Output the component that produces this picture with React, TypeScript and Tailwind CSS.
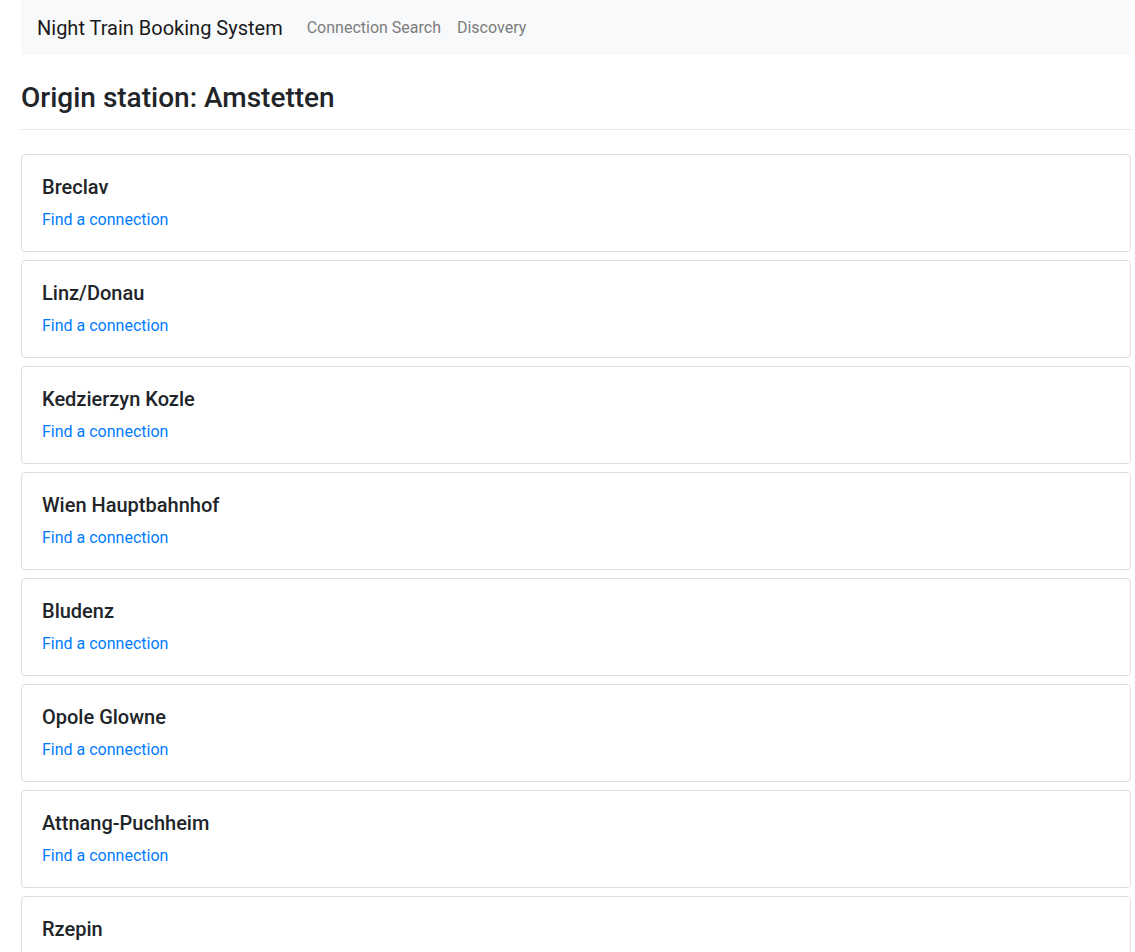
import React from "react";

const stations = [
  "Breclav",
  "Linz/Donau",
  "Kedzierzyn Kozle",
  "Wien Hauptbahnhof",
  "Bludenz",
  "Opole Glowne",
  "Attnang-Puchheim",
  "Rzepin",
];

export default function App() {
  return (
    <div
      className="h-[952px] overflow-hidden bg-white text-[#212529]"
      style={{ fontFamily: "Roboto, 'Liberation Sans', sans-serif" }}
    >
      <div className="ml-[21px] w-[1110px]">
        <nav className="flex h-[55px] items-center bg-[#f8f9fa] px-4">
          <span className="mr-4 text-[20px] leading-[30px] text-[#1a1a1a]">
            Night Train Booking System
          </span>
          <a className="px-2 text-[16px] leading-6 text-[#7c7d7d]">Connection Search</a>
          <a className="px-2 text-[16px] leading-6 text-[#7c7d7d]">Discovery</a>
        </nav>
        <h3 className="mt-[26px] text-[28px] font-medium leading-[1.2]">
          Origin station: Amstetten
        </h3>
        <hr className="mt-[14px] border-0 border-t border-[#e6e6e6]" />
        <div className="mt-6 flex flex-col gap-2">
          {stations.map((s) => (
            <div
              key={s}
              className="rounded border border-[#dfdfdf] px-5 pt-5 pb-[19px]"
            >
              <h5 className="mb-[9px] text-[20px] font-medium leading-[1.2]">{s}</h5>
              <a className="text-[16px] leading-6 text-[#007bff]">Find a connection</a>
            </div>
          ))}
        </div>
      </div>
    </div>
  );
}
